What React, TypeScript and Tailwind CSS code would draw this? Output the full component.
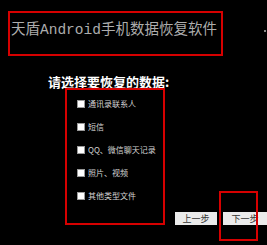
const options = ['通讯录联系人', '短信', 'QQ、微信聊天记录', '照片、视频', '其他类型文件'];

export default function App() {
  return (
    <div className="relative w-[267px] h-[245px] bg-black overflow-hidden">
      <div className="ml-[8px] mt-[11px] w-[215px] h-[45px] border-2 border-[#d60000] pl-[1px] pt-[8px]">
        <span
          className="block text-[14.5px] leading-[18px] text-[#adadad] whitespace-nowrap"
          style={{ fontFamily: '"Liberation Mono", "Noto Sans CJK SC", monospace' }}
        >
          天盾Android手机数据恢复软件
        </span>
      </div>
      <span className="absolute left-[264px] top-[30px] w-[2px] h-[2px] bg-[#888]" />

      <div
        className="ml-[48px] mt-[20px] text-[13px] leading-[12px] font-bold text-white whitespace-nowrap"
        style={{ fontFamily: '"Noto Sans CJK SC", sans-serif' }}
      >
        请选择要恢复的数据:
      </div>

      <div className="flex">
        <div className="ml-[65px] w-[100px] h-[137px] border-2 border-[#d60000] flex flex-col gap-[13px] pl-[10px] pt-[9px]">
          {options.map((o) => (
            <div key={o} className="flex items-center h-[10px] gap-[3px]">
              <span className="w-[8px] h-[8px] bg-white border border-[#9a9a9a]" />
              <span
                className="text-[8px] leading-[10px] text-[#d4d4d4] whitespace-nowrap"
                style={{ fontFamily: '"Noto Sans CJK SC", sans-serif' }}
              >
                {o}
              </span>
            </div>
          ))}
        </div>

        <div className="flex gap-[6px] ml-[10px] mt-[124px] h-[13px]">
          <button
            className="w-[42px] h-[13px] bg-[#ebebeb] text-[9px] leading-[13px] text-[#333] text-center"
            style={{ fontFamily: '"Noto Sans CJK SC", sans-serif' }}
          >
            上一步
          </button>
          <button
            className="w-[44px] h-[13px] bg-[#ebebeb] text-[9px] leading-[13px] text-[#333] text-center"
            style={{ fontFamily: '"Noto Sans CJK SC", sans-serif' }}
          >
            下一步
          </button>
        </div>
      </div>

      <div className="absolute left-[219px] top-[191px] w-[39px] h-[50px] border-2 border-[#d60000]" />
    </div>
  );
}
